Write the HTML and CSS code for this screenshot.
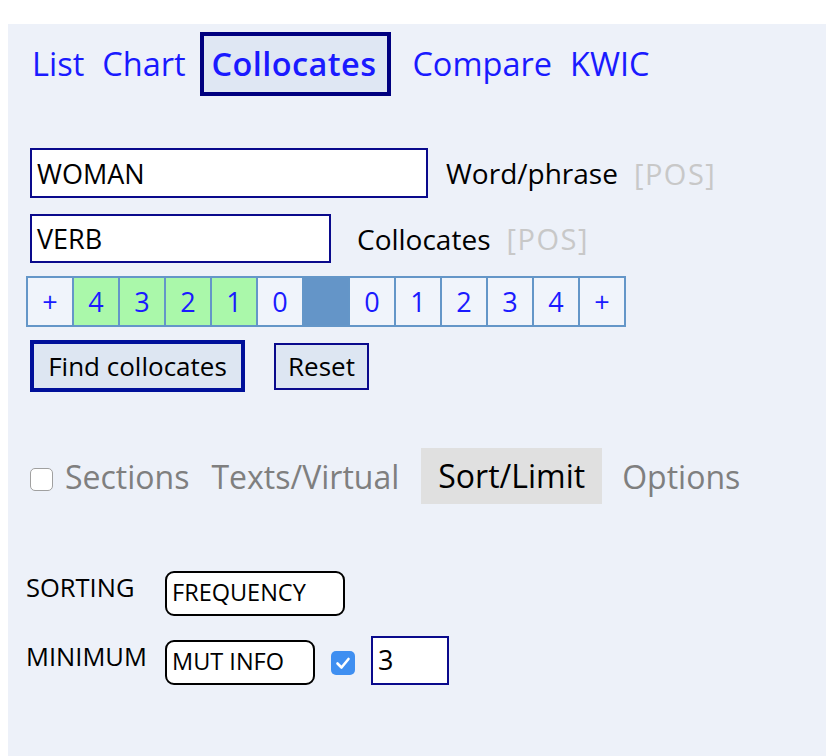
FILE: index.html
```html
<!DOCTYPE html>
<html>
<head>
<meta charset="utf-8">
<link rel="stylesheet" href="styles.css">
</head>
<body>
<div class="panel">
  <nav class="nav">
    <a class="nav-link">List</a>
    <a class="nav-link">Chart</a>
    <a class="nav-link active">Collocates</a>
    <a class="nav-link">Compare</a>
    <a class="nav-link">KWIC</a>
  </nav>

  <div class="form-row row-word">
    <div class="text-input wide">WOMAN</div>
    <span class="label">Word/phrase</span>
    <span class="pos">[POS]</span>
  </div>
  <div class="form-row row-coll">
    <div class="text-input narrow">VERB</div>
    <span class="label">Collocates</span>
    <span class="pos">[POS]</span>
  </div>

  <div class="span-grid">
    <div class="cell">+</div>
    <div class="cell on">4</div>
    <div class="cell on">3</div>
    <div class="cell on">2</div>
    <div class="cell on">1</div>
    <div class="cell">0</div>
    <div class="cell node"></div>
    <div class="cell">0</div>
    <div class="cell">1</div>
    <div class="cell">2</div>
    <div class="cell">3</div>
    <div class="cell">4</div>
    <div class="cell">+</div>
  </div>

  <div class="buttons">
    <button class="btn primary">Find collocates</button>
    <button class="btn secondary">Reset</button>
  </div>

  <div class="tabs">
    <span class="check-empty"></span>
    <span class="tab">Sections</span>
    <span class="tab">Texts/Virtual</span>
    <span class="tab current">Sort/Limit</span>
    <span class="tab">Options</span>
  </div>

  <div class="sort-section">
    <div class="sort-row">
      <span class="sort-label">SORTING</span>
      <div class="select sel-freq">FREQUENCY</div>
    </div>
    <div class="sort-row">
      <span class="sort-label">MINIMUM</span>
      <div class="select sel-mi">MUT INFO</div>
      <span class="check-on"><svg viewBox="0 0 24 24" width="24" height="24"><path d="M6.5 12.5 L10.5 16.5 L17.5 8" fill="none" stroke="#fff" stroke-width="2.6" stroke-linecap="round" stroke-linejoin="round"/></svg></span>
      <div class="num-input">3</div>
    </div>
  </div>
</div>
</body>
</html>
```

FILE: styles.css
```css
html, body {
  margin: 0;
  padding: 0;
  background: #ffffff;
  height: 100%;
}
body {
  padding: 24px 0 0 8px;
  box-sizing: border-box;
  font-family: "Open Sans", "Noto Sans", sans-serif;
  overflow: hidden;
}
.panel {
  background: #edf1f9;
  min-height: 732px;
  padding: 8px 0 0 0;
  box-sizing: border-box;
}
.nav {
  display: flex;
  align-items: center;
  padding-left: 24px;
  height: 64px;
}
.nav-link {
  color: #1a1aff;
  font-size: 32.5px;
  line-height: 40px;
  margin-right: 18px;
}
.nav-link.active {
  font-weight: 600;
  border: 4px solid #00007f;
  background: #dfe7f3;
  padding: 8px 11px 8px 8px;
  margin-left: -4px;
  margin-right: 21px;
  letter-spacing: 0.4px;
}
.form-row {
  display: flex;
  align-items: center;
  padding-left: 22px;
}
.row-word { margin-top: 52px; }
.row-coll { margin-top: 16px; }
.text-input {
  background: #fff;
  border: 2px solid #0a0a8c;
  box-sizing: border-box;
  font-size: 27px;
  color: #000;
  padding-left: 5px;
  display: flex;
  align-items: center;
}
.text-input.wide { width: 398px; height: 50px; margin-right: 18px; }
.text-input.narrow { width: 301px; height: 49px; margin-right: 26px; }
.label {
  font-size: 28px;
  color: #000;
  margin-right: 16px;
}
.pos {
  font-size: 29px;
  letter-spacing: 1.5px;
  color: #c8c8c8;
}
.span-grid {
  display: flex;
  margin: 13px 0 0 18px;
  width: 600px;
  border: 2px solid #6496c8;
  border-right: none;
  box-sizing: border-box;
  height: 51px;
}
.cell {
  flex: 1;
  border-right: 2px solid #6496c8;
  color: #1a1aff;
  font-size: 27px;
  display: flex;
  align-items: center;
  justify-content: center;
  background: #f0f4fb;
}
.cell.on { background: #aaf8aa; }
.cell.node { background: #6495c8; }
.buttons {
  display: flex;
  align-items: center;
  margin: 13px 0 0 22px;
}
.btn {
  font-family: "Open Sans", "Noto Sans", sans-serif;
  font-size: 26px;
  color: #000;
  background: #dde6f2;
  box-sizing: border-box;
  padding: 0;
}
.btn.primary {
  border: 4px solid #00109a;
  width: 215px;
  height: 52px;
  margin-right: 29px;
}
.btn.secondary {
  border: 2px solid #0a0a8c;
  width: 95px;
  height: 47px;
}
.tabs {
  display: flex;
  align-items: center;
  margin: 56px 0 0 22px;
  height: 56px;
}
.check-empty {
  width: 21px;
  height: 21px;
  border: 1px solid #a0a0a0;
  border-radius: 5px;
  background: #fff;
  margin-right: 12px;
  margin-top: 7px;
}
.tab {
  font-size: 32px;
  color: #7f7f7f;
  margin-right: 22px;
}
.tab.current {
  background: #e0e0e0;
  color: #000;
  height: 56px;
  line-height: 56px;
  padding: 0 17px 0 17px;
  box-sizing: border-box;
  margin-right: 20px;
}
.sort-section {
  margin: 67px 0 0 18px;
}
.sort-row {
  display: flex;
  align-items: flex-start;
}
.sort-row + .sort-row { margin-top: 24px; }
.sort-label {
  width: 139px;
  font-size: 25.5px;
  color: #000;
  line-height: 30px;
  margin-top: 1px;
}
.select {
  border: 2px solid #000;
  border-radius: 9px;
  background: #fff;
  font-size: 23.5px;
  color: #000;
  box-sizing: border-box;
  padding: 4px 0 0 5px;
  line-height: 30px;
}
.sel-freq { width: 180px; height: 45px; }
.sel-mi { width: 150px; height: 45px; margin-right: 16px; }
.check-on {
  width: 24px;
  height: 24px;
  background: #3f8ff1;
  border-radius: 5px;
  margin: 11px 16px 0 0;
  display: flex;
}
.num-input {
  width: 78px;
  height: 49px;
  border: 2px solid #0a0a8c;
  background: #fff;
  box-sizing: border-box;
  font-size: 27px;
  padding-left: 5px;
  line-height: 44px;
  margin-top: -4px;
}
```
